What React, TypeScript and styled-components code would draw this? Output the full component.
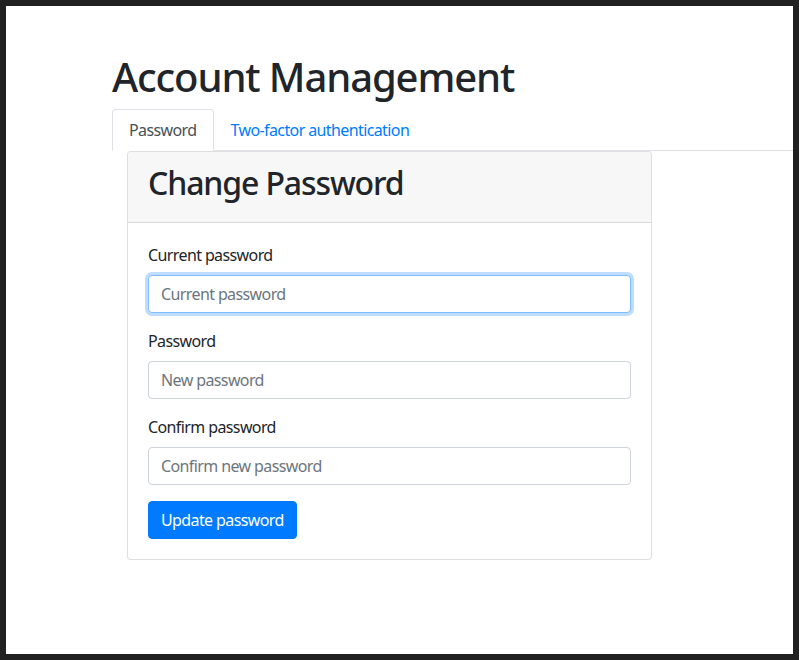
import React from "react";
import styled, { createGlobalStyle } from "styled-components";

const GlobalStyle = createGlobalStyle`
  html, body {
    margin: 0;
    padding: 0;
    background: #212121;
  }
  body {
    font-family: "Noto Sans", "Open Sans", sans-serif;
    color: #212529;
    letter-spacing: -0.038em;
  }
  * {
    box-sizing: border-box;
  }
`;

const Frame = styled.div`
  margin: 6px;
  width: 787px;
  height: 648px;
  background: #fff;
  overflow: hidden;
`;

const Page = styled.div`
  padding: 47px 0 0 106px;
`;

const Title = styled.h1`
  margin: 0 0 8px;
  font-size: 40px;
  font-weight: 500;
  line-height: 48px;
  letter-spacing: -0.028em;
`;

const Tabs = styled.ul`
  display: flex;
  margin: 0;
  padding: 0;
  list-style: none;
  border-bottom: 1px solid #dee2e6;
`;

const Tab = styled.li<{ active?: boolean }>`
  margin-bottom: -1px;
  padding: 8px 16px;
  font-size: 16px;
  line-height: 24px;
  border: 1px solid ${(p) => (p.active ? "#dee2e6" : "transparent")};
  border-bottom-color: ${(p) => (p.active ? "#fff" : "transparent")};
  border-radius: 4px 4px 0 0;
  background: ${(p) => (p.active ? "#fff" : "transparent")};
  color: ${(p) => (p.active ? "#495057" : "#007bff")};
  cursor: pointer;
`;

const Card = styled.div`
  width: 525px;
  margin-left: 15px;
  border: 1px solid rgba(0, 0, 0, 0.125);
  border-radius: 4px;
  background: #fff;
`;

const CardHeader = styled.div`
  padding: 12px 20px;
  background: #f7f7f7;
  border-bottom: 1px solid rgba(0, 0, 0, 0.125);
  border-radius: 3px 3px 0 0;
`;

const CardTitle = styled.h2`
  margin: 0 0 8px;
  font-size: 32px;
  font-weight: 500;
  line-height: 38px;
  letter-spacing: -0.035em;
`;

const CardBody = styled.form`
  padding: 20px;
`;

const Group = styled.div`
  margin-bottom: 16px;
`;

const Label = styled.label`
  display: block;
  margin-bottom: 8px;
  font-size: 16px;
  line-height: 24px;
`;

const Input = styled.input<{ focused?: boolean }>`
  display: block;
  width: 100%;
  height: 38px;
  padding: 6px 12px;
  font-family: inherit;
  font-size: 16px;
  line-height: 24px;
  letter-spacing: inherit;
  color: #495057;
  background: #fff;
  border: 1px solid ${(p) => (p.focused ? "#80bdff" : "#ced4da")};
  border-radius: 4px;
  outline: none;
  box-shadow: ${(p) => (p.focused ? "0 0 0 3px rgba(0, 123, 255, 0.25)" : "none")};

  &::placeholder {
    color: #6c757d;
  }
`;

const Button = styled.button`
  display: inline-block;
  height: 38px;
  padding: 6px 12px;
  font-family: inherit;
  font-size: 16px;
  line-height: 24px;
  letter-spacing: inherit;
  color: #fff;
  background: #007bff;
  border: 1px solid #007bff;
  border-radius: 4px;
  cursor: pointer;
`;

const fields = [
  { label: "Current password", placeholder: "Current password", focused: true },
  { label: "Password", placeholder: "New password" },
  { label: "Confirm password", placeholder: "Confirm new password" },
];

export default function App() {
  return (
    <>
      <GlobalStyle />
      <Frame>
        <Page>
          <Title>Account Management</Title>
          <Tabs>
            <Tab active>Password</Tab>
            <Tab>Two-factor authentication</Tab>
          </Tabs>
          <Card>
            <CardHeader>
              <CardTitle>Change Password</CardTitle>
            </CardHeader>
            <CardBody onSubmit={(e) => e.preventDefault()}>
              {fields.map((f) => (
                <Group key={f.label}>
                  <Label>{f.label}</Label>
                  <Input
                    type="password"
                    placeholder={f.placeholder}
                    focused={f.focused}
                    autoFocus={f.focused}
                  />
                </Group>
              ))}
              <Button type="submit">Update password</Button>
            </CardBody>
          </Card>
        </Page>
      </Frame>
    </>
  );
}
